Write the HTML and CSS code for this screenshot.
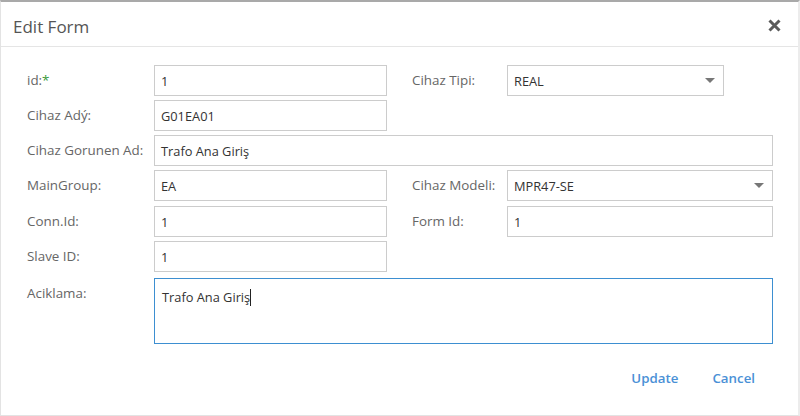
FILE: index.html
```html
<!DOCTYPE html>
<html lang="tr">
<head>
<meta charset="utf-8">
<title>Edit Form</title>
<link rel="stylesheet" href="styles.css">
</head>
<body>
<div class="dialog">
  <div class="dialog-header">
    <span class="dialog-title">Edit Form</span>
    <span class="dialog-close" aria-label="Close">
      <svg width="13" height="13" viewBox="0 0 13 13"><path d="M1.5 1.5 L11.5 11.5 M11.5 1.5 L1.5 11.5" stroke="#5a5a5a" stroke-width="3" fill="none"/></svg>
    </span>
  </div>
  <div class="dialog-body">
    <div class="form-grid">
      <label class="lbl c1">id:<span class="req">*</span></label>
      <div class="field c2"><span class="val">1</span></div>
      <label class="lbl c4">Cihaz Tipi:</label>
      <div class="field select short c5"><span class="val">REAL</span><span class="caret-down"></span></div>

      <label class="lbl c1">Cihaz Adý:</label>
      <div class="field c2"><span class="val">G01EA01</span></div>

      <label class="lbl c1">Cihaz Gorunen Ad:</label>
      <div class="field wide"><span class="val">Trafo Ana Giriş</span></div>

      <label class="lbl c1">MainGroup:</label>
      <div class="field c2"><span class="val">EA</span></div>
      <label class="lbl c4">Cihaz Modeli:</label>
      <div class="field select c5"><span class="val">MPR47-SE</span><span class="caret-down"></span></div>

      <label class="lbl c1">Conn.Id:</label>
      <div class="field c2"><span class="val">1</span></div>
      <label class="lbl c4">Form Id:</label>
      <div class="field c5"><span class="val">1</span></div>

      <label class="lbl c1">Slave ID:</label>
      <div class="field c2"><span class="val">1</span></div>

      <label class="lbl c1 top">Aciklama:</label>
      <div class="field wide area"><span class="val">Trafo Ana Giriş</span><span class="text-caret"></span></div>
    </div>
  </div>
  <div class="dialog-footer">
    <button class="btn">Update</button>
    <button class="btn">Cancel</button>
  </div>
</div>
</body>
</html>
```

FILE: styles.css
```css
* { box-sizing: border-box; }
html, body { margin: 0; padding: 0; background: #fff; }
body {
  font-family: "Open Sans", "Noto Sans", sans-serif;
  font-size: 12.8px;
  color: #333;
}
.dialog {
  width: 800px;
  height: 416px;
  border: 1px solid #e3e3e3;
  border-top: 2px solid #a9a9a9;
  border-right-width: 2px;
  border-right-color: #ececec;
  display: flex;
  flex-direction: column;
}
.dialog-header {
  height: 45px;
  border-bottom: 1px solid #e5e5e5;
  display: flex;
  align-items: center;
  justify-content: space-between;
  padding: 0 17px 0 12px;
}
.dialog-title {
  font-size: 17px;
  color: #555;
  margin-top: 4px;
}
.dialog-close { display: flex; margin-top: 2px; }
.dialog-body {
  padding: 18px 0 0 26px;
}
.form-grid {
  display: grid;
  grid-template-columns: 127px 233px 25px 95px 266px;
  grid-template-rows: 31px 31px 31px 32px 31px 31px 66px;
  row-gap: 4px;
}
.lbl {
  color: #666;
  font-size: 13.4px;
  line-height: 18px;
  padding-top: 6px;
  white-space: nowrap;
}
.lbl.top { padding-top: 8px; }
.req { color: #3a9a3a; }
.c1 { grid-column: 1; }
.c2 { grid-column: 2; }
.c4 { grid-column: 4; }
.c5 { grid-column: 5; }
.wide { grid-column: 2 / 6; }
.field {
  border: 1px solid #cccccc;
  background: #fff;
  display: flex;
  align-items: center;
  padding: 0 6px;
  height: 31px;
  color: #333;
  position: relative;
}
.field.short { width: 217px; }
.select { justify-content: space-between; padding-right: 8px; }
.caret-down {
  width: 0; height: 0;
  border-left: 5px solid transparent;
  border-right: 5px solid transparent;
  border-top: 5px solid #777;
}
.field.area {
  border-color: #3d8fd1;
  align-items: flex-start;
  padding-top: 9px;
  padding-left: 7px;
  margin-top: 2px;
  height: 66px;
}
.text-caret {
  display: inline-block;
  width: 1px;
  height: 17px;
  background: #222;
  margin-top: 1px;
}
.dialog-footer {
  margin-top: auto;
  height: 60px;
  display: flex;
  justify-content: flex-end;
  align-items: flex-start;
  padding: 14px 43px 0 0;
  gap: 34px;
}
.btn {
  border: none;
  background: none;
  padding: 0;
  font-family: inherit;
  font-size: 13.3px;
  font-weight: 600;
  color: #4a90d6;
  cursor: pointer;
}
```
